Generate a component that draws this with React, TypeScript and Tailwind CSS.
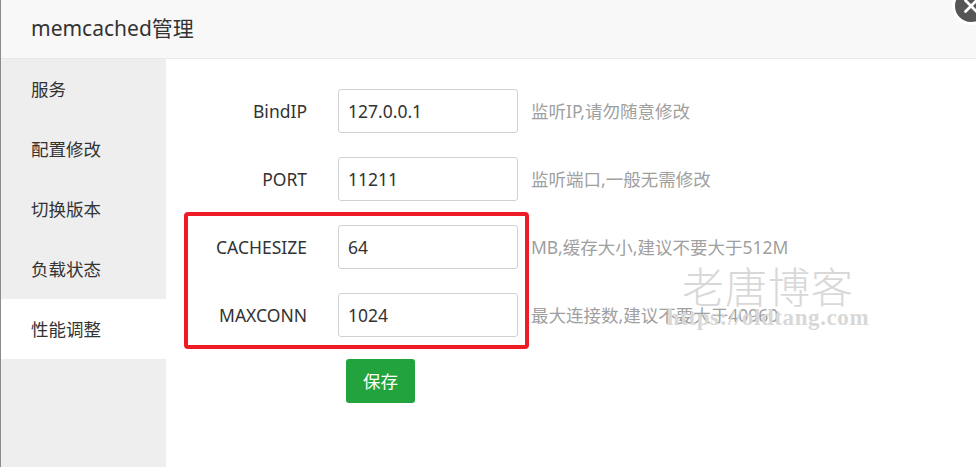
import { X } from "lucide-react"

// ─── Data ────────────────────────────────────────────────────────────────────
const MENU = ["服务", "配置修改", "切换版本", "负载状态", "性能调整"]
const ACTIVE = "性能调整"

const FIELDS = [
  { label: "BindIP", value: "127.0.0.1", hint: "监听IP,请勿随意修改" },
  { label: "PORT", value: "11211", hint: "监听端口,一般无需修改" },
  { label: "CACHESIZE", value: "64", hint: "MB,缓存大小,建议不要大于512M" },
  { label: "MAXCONN", value: "1024", hint: "最大连接数,建议不要大于40960" },
]

// ─── Sub-components ──────────────────────────────────────────────────────────
function FieldRow({ label, value, hint }: { label: string; value: string; hint: string }) {
  return (
    <div className="flex h-[44px] items-center">
      <div className="w-[141px] text-right text-[17.5px] text-[#333]">{label}</div>
      <input
        readOnly
        value={value}
        className="ml-[31px] h-[44px] w-[180px] rounded-[3px] border border-[#d2d2d2] bg-white px-[9px] text-[17.5px] text-[#333] outline-none"
      />
      <div className="ml-[13px] whitespace-nowrap text-[17.5px] text-[#a0a0a0]">{hint}</div>
    </div>
  )
}

// ─── Main ────────────────────────────────────────────────────────────────────
export default function App() {
  return (
    <div className="relative h-[467px] w-[976px] overflow-hidden border-l border-[#8c8c8c] bg-white font-['Noto_Sans','Noto_Sans_CJK_SC',sans-serif]">
      {/* Title bar */}
      <div className="flex h-[59px] items-center border-b border-[#e8e8e8] bg-[#f8f8f8] pl-[30px] text-[21px] text-[#333]">
        memcached管理
      </div>

      {/* Close button (mostly off-canvas) */}
      <div className="absolute left-[951px] top-[-13px] flex h-[38px] w-[38px] items-center justify-center rounded-full border-[3px] border-white bg-[#555]">
        <X size={22} strokeWidth={3} className="text-white" />
      </div>

      <div className="flex h-[408px]">
        {/* Sidebar */}
        <div className="flex w-[165px] flex-col bg-[#eee]">
          {MENU.map((item) => (
            <div
              key={item}
              className={
                item === ACTIVE
                  ? "flex h-[60px] items-center bg-white pl-[30px] text-[17.5px] text-[#333]"
                  : "flex h-[60px] items-center pl-[30px] text-[17.5px] text-[#333]"
              }
            >
              {item}
            </div>
          ))}
        </div>

        {/* Form */}
        <div className="relative flex flex-1 flex-col gap-[24px] pt-[30px]">
          {FIELDS.map((f) => (
            <FieldRow key={f.label} {...f} />
          ))}
          <button
            type="button"
            className="ml-[180px] mt-[-2px] h-[44px] w-[69px] rounded-[3px] bg-[#22a33d] text-[17.5px] text-white"
          >
            保存
          </button>

          {/* Annotation box */}
          <div className="absolute left-[18px] top-[153px] h-[137px] w-[345px] rounded-[4px] border-[4px] border-[#ee1d25]" />
        </div>
      </div>

      {/* Watermark */}
      <div className="pointer-events-none absolute left-[662px] top-[262px] flex w-[210px] flex-col items-center">
        <div className="font-['Noto_Sans_CJK_SC',sans-serif] text-[42px] font-light leading-[46px] tracking-[1px] text-[#d8d8d8]">
          老唐博客
        </div>
        <div className="mt-[-3px] font-['Liberation_Serif',serif] text-[23px] font-bold leading-[26px] tracking-[0.6px] text-[#d8d8d8]">
          https://oldtang.com
        </div>
      </div>
    </div>
  )
}
